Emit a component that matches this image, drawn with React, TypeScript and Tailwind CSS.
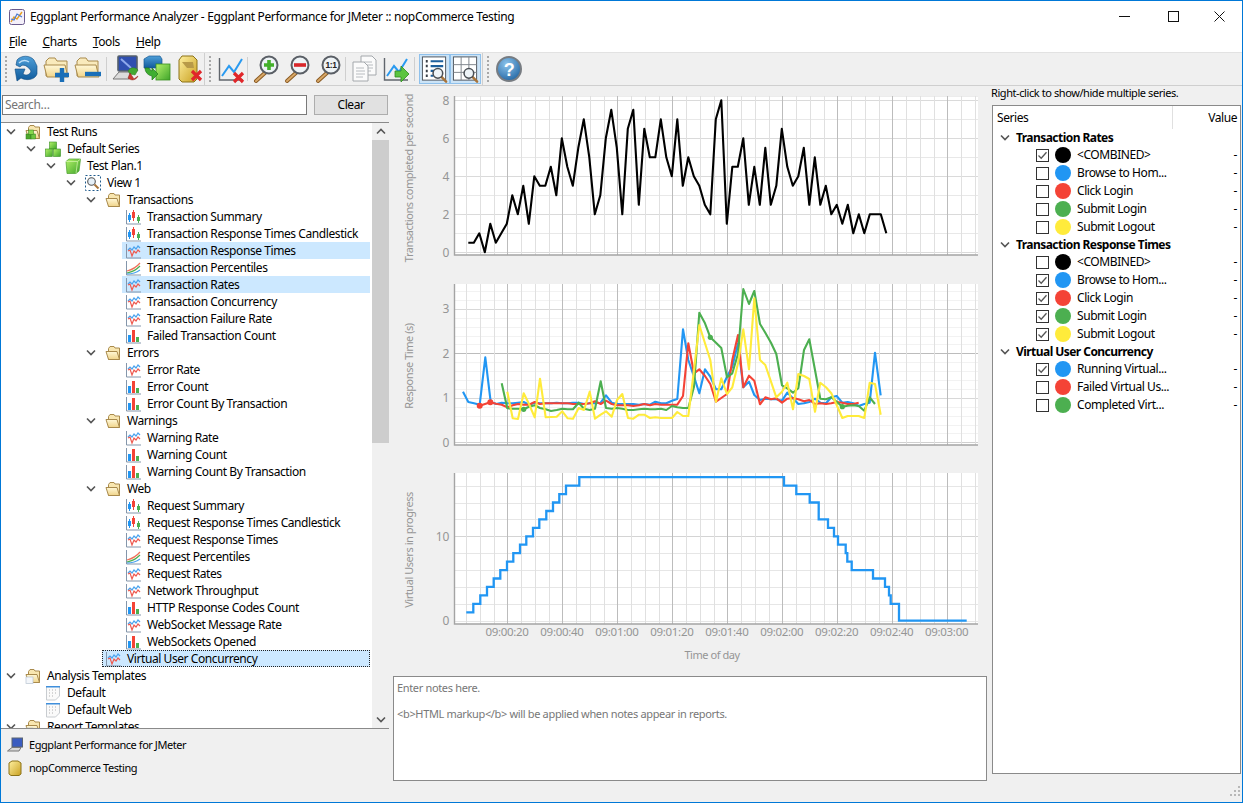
import React from "react";

const B = "#2196f3", R = "#f44336", G = "#4caf50", Y = "#ffeb3b";

function Defs() {
  return (
    <svg className="block w-0 h-0" aria-hidden="true">
      <defs>
        <linearGradient id="gFolder" x1="0" y1="0" x2="0" y2="1"><stop offset="0" stopColor="#fff8d8" /><stop offset="1" stopColor="#f0d48a" /></linearGradient>
        <linearGradient id="gBlue" x1="0" y1="0" x2="0" y2="1"><stop offset="0" stopColor="#4f9fd8" /><stop offset="1" stopColor="#0f5a9c" /></linearGradient>
        <linearGradient id="gGreen" x1="0" y1="0" x2="1" y2="1"><stop offset="0" stopColor="#b4f26a" /><stop offset="1" stopColor="#3fa52a" /></linearGradient>
        <linearGradient id="gGold" x1="0" y1="0" x2="1" y2="1"><stop offset="0" stopColor="#fff0a0" /><stop offset="1" stopColor="#c9a020" /></linearGradient>
        <radialGradient id="gHelp" cx="0.4" cy="0.3" r="0.8"><stop offset="0" stopColor="#8cc4ec" /><stop offset="1" stopColor="#1c5f9e" /></radialGradient>
      </defs>
    </svg>
  );
}

function Chevron({ up }: { up?: boolean }) {
  return (
    <svg width="10" height="7" viewBox="0 0 10 7" className="block">
      <polyline points={up ? "1,5.5 5,1.5 9,5.5" : "1,1.5 5,5.5 9,1.5"} fill="none" stroke="#555" strokeWidth="1.6" />
    </svg>
  );
}

const Axes = () => <path d="M1.5 1V15H16" fill="none" stroke="#8496ab" strokeWidth="1" />;

function TreeIcon({ k }: { k: string }) {
  const p = { width: 16, height: 16, viewBox: "0 0 16 16", className: "block shrink-0" };
  if (k === "line")
    return (
      <svg {...p}>
        <Axes />
        <polyline points="3,7 5,5 7,7 9,4 11,6 13,3 15,5" fill="none" stroke="#4aa3ee" strokeWidth="1.2" />
        <polyline points="3,8 5,7 7,13 9,8 11,10 13,7 15,9" fill="none" stroke="#ee5a50" strokeWidth="1.2" />
      </svg>
    );
  if (k === "candle")
    return (
      <svg {...p}>
        <Axes />
        <path d="M4.5 4V13" stroke="#2196f3" /><rect x="3" y="6" width="3" height="5" fill="#2196f3" />
        <path d="M8.5 1V12" stroke="#f44336" /><rect x="7" y="3" width="3" height="6" fill="#f44336" />
        <path d="M13.5 6V14" stroke="#4caf50" /><rect x="12" y="8" width="3" height="4" fill="#4caf50" />
      </svg>
    );
  if (k === "bar")
    return (
      <svg {...p}>
        <Axes />
        <rect x="3" y="7" width="3" height="7" fill="#2196f3" />
        <rect x="7" y="2" width="3" height="12" fill="#f44336" />
        <rect x="11" y="9" width="3" height="5" fill="#4caf50" />
      </svg>
    );
  if (k === "area")
    return (
      <svg {...p}>
        <Axes />
        <path d="M2 13C6 12 9 12 15 6" fill="none" stroke="#4caf50" strokeWidth="1.2" />
        <path d="M2 11C6 10 10 9 15 3" fill="none" stroke="#f0705a" strokeWidth="1.2" />
        <path d="M2 14C7 14 11 13 15 10" fill="none" stroke="#4aa3ee" strokeWidth="1.2" />
      </svg>
    );
  if (k === "doc")
    return (
      <svg {...p}>
        <path d="M1.5 1.5H14.5V11L10.5 15H1.5Z" fill="#fafafa" stroke="#c8ccd0" />
        <rect x="1" y="1" width="14" height="1.5" fill="#3f8fdc" />
        <path d="M4 5h1M7 5h1M10 5h1M4 8h1M7 8h1M10 8h1M4 11h1M7 11h1" stroke="#b0b0b0" />
      </svg>
    );
  if (k === "folder" || k === "folderGreen" || k === "folderDoc")
    return (
      <svg {...p}>
        <path d="M3.5 3.5L5 1.5H9L10 3H14.5V14.5H3.5Z" fill="#f8e6b0" stroke="#a98a4c" />
        <path d="M1 6.5H12L14.5 14.5H3.5Z" fill="url(#gFolder)" stroke="#a98a4c" />
        {k === "folderGreen" && (
          <g>
            <rect x="1" y="10" width="5" height="5" fill="#4fa82e" stroke="#2f7d1c" strokeWidth=".5" />
            <rect x="6" y="10" width="4.5" height="5" fill="#6cc63f" stroke="#2f7d1c" strokeWidth=".5" />
            <rect x="3.5" y="6" width="5" height="4.5" fill="#86d84c" stroke="#2f7d1c" strokeWidth=".5" />
          </g>
        )}
        {k === "folderDoc" && <rect x="1" y="9" width="7" height="6.5" fill="#f3f6fa" stroke="#b8c4d0" strokeWidth=".7" />}
      </svg>
    );
  if (k === "cubes")
    return (
      <svg {...p}>
        <rect x="4.5" y="1" width="7" height="7" fill="url(#gGreen)" stroke="#3a8f22" strokeWidth=".6" />
        <rect x="0.5" y="8" width="7" height="7.5" fill="url(#gGreen)" stroke="#3a8f22" strokeWidth=".6" />
        <rect x="8.5" y="8" width="7" height="7.5" fill="url(#gGreen)" stroke="#3a8f22" strokeWidth=".6" />
      </svg>
    );
  if (k === "cube")
    return (
      <svg {...p}>
        <path d="M1 3.5L4 1H15.5L14 13L11 15.5H2Z" fill="url(#gGreen)" stroke="#4a9f2e" strokeWidth=".7" />
        <path d="M1 3.5H12.5L15.5 1M12.5 3.5L11 15.5" fill="none" stroke="#d8f8b0" strokeWidth=".7" />
      </svg>
    );
  if (k === "view")
    return (
      <svg {...p}>
        <rect x="0.5" y="0.5" width="15" height="15" fill="none" stroke="#1f5a8c" strokeDasharray="2 2" />
        <circle cx="6.5" cy="6.5" r="3.8" fill="#e6f0f8" stroke="#555" strokeWidth="1.1" />
        <path d="M9.5 9.5L13.5 13.5" stroke="#a8743a" strokeWidth="2" />
      </svg>
    );
  return null;
}

type Row = { t: string; l: number; i: string; open?: boolean; sel?: boolean; focus?: boolean };
const rows: Row[] = [
  { t: "Test Runs", l: 0, i: "folderGreen", open: true },
  { t: "Default Series", l: 1, i: "cubes", open: true },
  { t: "Test Plan.1", l: 2, i: "cube", open: true },
  { t: "View 1", l: 3, i: "view", open: true },
  { t: "Transactions", l: 4, i: "folder", open: true },
  { t: "Transaction Summary", l: 5, i: "candle" },
  { t: "Transaction Response Times Candlestick", l: 5, i: "candle" },
  { t: "Transaction Response Times", l: 5, i: "line", sel: true },
  { t: "Transaction Percentiles", l: 5, i: "area" },
  { t: "Transaction Rates", l: 5, i: "line", sel: true },
  { t: "Transaction Concurrency", l: 5, i: "line" },
  { t: "Transaction Failure Rate", l: 5, i: "line" },
  { t: "Failed Transaction Count", l: 5, i: "bar" },
  { t: "Errors", l: 4, i: "folder", open: true },
  { t: "Error Rate", l: 5, i: "line" },
  { t: "Error Count", l: 5, i: "bar" },
  { t: "Error Count By Transaction", l: 5, i: "bar" },
  { t: "Warnings", l: 4, i: "folder", open: true },
  { t: "Warning Rate", l: 5, i: "line" },
  { t: "Warning Count", l: 5, i: "bar" },
  { t: "Warning Count By Transaction", l: 5, i: "bar" },
  { t: "Web", l: 4, i: "folder", open: true },
  { t: "Request Summary", l: 5, i: "candle" },
  { t: "Request Response Times Candlestick", l: 5, i: "candle" },
  { t: "Request Response Times", l: 5, i: "line" },
  { t: "Request Percentiles", l: 5, i: "area" },
  { t: "Request Rates", l: 5, i: "line" },
  { t: "Network Throughput", l: 5, i: "line" },
  { t: "HTTP Response Codes Count", l: 5, i: "bar" },
  { t: "WebSocket Message Rate", l: 5, i: "line" },
  { t: "WebSockets Opened", l: 5, i: "bar" },
  { t: "Virtual User Concurrency", l: 4, i: "line", sel: true, focus: true },
  { t: "Analysis Templates", l: 0, i: "folderDoc", open: true },
  { t: "Default", l: 1, i: "doc" },
  { t: "Default Web", l: 1, i: "doc" },
  { t: "Report Templates", l: 0, i: "folderDoc", open: true },
];

function Tree() {
  return (
    <div className="flex-1 min-w-0 overflow-hidden pl-[1px]">
      {rows.map((r) => (
        <div key={r.t} className="flex h-[17px] items-center" style={{ paddingLeft: r.l * 20 }}>
          <div className="w-[20px] shrink-0 flex justify-center pr-[2px]">{r.open && <Chevron />}</div>
          <div className={"flex-1 flex h-full items-center gap-[6px] pl-[3px] mr-[2px] " + (r.sel ? "bg-[#cce8ff] " : "") + (r.focus ? "outline-1 outline-dotted -outline-offset-1 outline-[#222]" : "")}>
            <TreeIcon k={r.i} />
            <span className="whitespace-nowrap">{r.t}</span>
          </div>
        </div>
      ))}
    </div>
  );
}

/* Toolbar icons */
const Ic = ({ children }: { children: React.ReactNode }) => (
  <svg width="30" height="30" viewBox="0 0 30 30" className="block">{children}</svg>
);
const BigFolder = () => (
  <g>
    <path d="M4 7L7 4H13L15 7H25V22H4Z" fill="#f9eabc" stroke="#a98a4c" />
    <path d="M2 11H23L26 23H5Z" fill="url(#gFolder)" stroke="#a98a4c" />
  </g>
);
const Lens = ({ children }: { children?: React.ReactNode }) => (
  <g>
    <path d="M16 17L5 27" stroke="#8a5a22" strokeWidth="4" strokeLinecap="round" />
    <path d="M16 17L5 27" stroke="#d8a868" strokeWidth="2" strokeLinecap="round" />
    <circle cx="18" cy="11" r="8.5" fill="#eef3f6" stroke="#5a5f66" strokeWidth="2" />
    {children}
  </g>
);
const MiniLens = () => (
  <g>
    <path d="M22 23L27 28" stroke="#a8743a" strokeWidth="2.6" strokeLinecap="round" />
    <circle cx="18.5" cy="19.5" r="5" fill="#eef4f8" stroke="#4a4f55" strokeWidth="1.6" />
  </g>
);
const ChartAxes = () => (
  <g>
    <path d="M4.5 4V26H28" fill="none" stroke="#60656c" strokeWidth="1.4" />
    <polyline points="7,22 14,12 19,18 27,5" fill="none" stroke="#2a9af0" strokeWidth="2" />
  </g>
);
const RedX = ({ x = 0, y = 0 }: { x?: number; y?: number }) => (
  <path d={`M${x + 17} ${y + 17}L${x + 26} ${y + 26}M${x + 26} ${y + 17}L${x + 17} ${y + 26}`} stroke="#e0262a" strokeWidth="3.2" />
);
const Page = ({ x, y }: { x: number; y: number }) => (
  <g>
    <path d={`M${x} ${y}H${x + 11}L${x + 15} ${y + 4}V${y + 19}H${x}Z`} fill="#fbfbfb" stroke="#a4a8ac" />
    <path d={`M${x + 3} ${y + 6}h8M${x + 3} ${y + 9}h9M${x + 3} ${y + 12}h9M${x + 3} ${y + 15}h7`} stroke="#b8bcc0" />
  </g>
);

const tool: Record<string, React.ReactNode> = {
  refresh: (
    <Ic>
      <path d="M6 6C10 1 19 1 23 6L26 12V20C24 26 15 27 10 24L6 27L4 15H14L12 20C15 22 19 21 20 17C17 12 12 9 9 13L5 11Z" fill="url(#gBlue)" stroke="#0d4a80" strokeWidth=".6" />
      <path d="M8 9C11 6 15 6 18 8" fill="none" stroke="#bfe0f8" strokeWidth="1.5" />
    </Ic>
  ),
  fplus: (
    <Ic>
      <BigFolder />
      <path d="M20 14V28M13 21H27" stroke="#1a6fb8" strokeWidth="4.4" />
    </Ic>
  ),
  fminus: (
    <Ic>
      <BigFolder />
      <path d="M12 20H28" stroke="#1a6fb8" strokeWidth="4.4" />
    </Ic>
  ),
  monitor: (
    <Ic>
      <rect x="7" y="2" width="19" height="15" rx="1" fill="#2f4fb0" stroke="#55606c" strokeWidth="1.6" />
      <path d="M10 5L20 14" stroke="#8ea8ec" strokeWidth="2" />
      <path d="M2 25L8 18H20L18 25Z" fill="#dcdcdc" stroke="#777" />
      <path d="M17 17A6 6 0 0 1 27 16L24 21L19 20Z" fill="#43a832" stroke="#2f7d1c" strokeWidth=".5" />
      <path d="M27 22A6 6 0 0 1 17 24L19 19L23 25Z" fill="#c8382e" stroke="#8a2018" strokeWidth=".5" />
    </Ic>
  ),
  boxes: (
    <Ic>
      <path d="M2 5L7 2H18L20 5V14H2Z" fill="url(#gBlue)" stroke="#1b5a92" strokeWidth=".7" />
      <rect x="14" y="10" width="14" height="16" fill="url(#gGreen)" stroke="#3a8f22" strokeWidth=".8" />
      <path d="M3 14A8 8 0 0 0 10 22V26L16 20L10 14V17A5 5 0 0 1 7 14Z" fill="#3fae30" stroke="#1f7a18" strokeWidth=".7" />
    </Ic>
  ),
  jar: (
    <Ic>
      <path d="M6 6L9 2H20L24 6V25L21 28H9L6 25Z" fill="url(#gGold)" stroke="#8c7318" />
      <path d="M9 8H20L21 14H14Z" fill="#b89a48" />
      <RedX x={2} y={0} />
    </Ic>
  ),
  chartX: (
    <Ic>
      <ChartAxes />
      <RedX x={2} y={2} />
    </Ic>
  ),
  zoomIn: (
    <Ic>
      <Lens>
        <path d="M18 6V16M13 11H23" stroke="#43b02a" strokeWidth="3.6" />
      </Lens>
    </Ic>
  ),
  zoomOut: (
    <Ic>
      <Lens>
        <path d="M12 11H24" stroke="#d8262a" strokeWidth="3.6" />
      </Lens>
    </Ic>
  ),
  zoom1: (
    <Ic>
      <Lens>
        <text x="18" y="14" textAnchor="middle" fontSize="8.5" fontWeight="700" fill="#222" fontFamily="Liberation Sans, sans-serif">1:1</text>
      </Lens>
    </Ic>
  ),
  docs: (
    <Ic>
      <Page x={12} y={2} />
      <Page x={4} y={8} />
    </Ic>
  ),
  chartArrow: (
    <Ic>
      <ChartAxes />
      <path d="M15 17H21V12L29 20L21 28V23H15Z" fill="#5cc440" stroke="#2f8a1e" strokeWidth=".8" />
    </Ic>
  ),
  listZoom: (
    <Ic>
      <rect x="2.5" y="2.5" width="24" height="24" fill="#fff" stroke="#4f565e" />
      <path d="M11 7H24M11 12H24M11 17H15M11 22H14" stroke="#1d5f9c" strokeWidth="2.2" />
      <path d="M6 7h2M6 12h2M6 17h2M6 22h2" stroke="#3a4048" strokeWidth="2.6" />
      <MiniLens />
    </Ic>
  ),
  gridZoom: (
    <Ic>
      <rect x="2.5" y="2.5" width="24" height="24" fill="#fff" stroke="#4f565e" />
      <path d="M2.5 10.5H26.5M2.5 18.5H26.5M10.5 2.5V26.5M18.5 2.5V26.5" stroke="#80868c" />
      <MiniLens />
    </Ic>
  ),
  help: (
    <Ic>
      <circle cx="15" cy="15" r="12" fill="url(#gHelp)" stroke="#777c82" strokeWidth="2" />
      <text x="15" y="21.5" textAnchor="middle" fontSize="18" fontWeight="700" fill="#fff" fontFamily="Liberation Sans, sans-serif">?</text>
    </Ic>
  ),
};

const TB = ({ k, on }: { k: string; on?: boolean }) => (
  <div className={"w-[31px] h-[30px] flex items-center justify-center " + (on ? "bg-[#cce4f7] border border-[#8fc1ec]" : "")}>{tool[k]}</div>
);
const Sep = ({ c }: { c: string }) => <div className={"w-px h-[24px] bg-[#cfcfcf] " + c} />;
const Grip = ({ c }: { c: string }) => (
  <div className={"w-[2px] h-[26px] border-l-2 border-dotted border-[#a8a8a8] " + c} />
);

/* Charts */
function xGrid(y1: number, y2: number) {
  const out: React.ReactNode[] = [];
  for (let n = -3; n <= 34; n++) {
    const x = Math.round(507.3 + n * 13.75) + 0.5;
    const major = n % 4 === 0;
    out.push(<line key={n} x1={x} x2={x} y1={y1} y2={y2} stroke={major ? "#bcbcbc" : "#e0e0e0"} strokeWidth="1" shapeRendering="crispEdges" />);
  }
  return out;
}
const TEXT = "#959595";

function Chart({ y, h, top, bottom, lines, ticks, label, labelY, extra, children }: {
  y: number; h: number; top: number; bottom: number;
  lines: { y: number; c: string }[]; ticks: { y: number; t: string }[];
  label: string; labelY: number; extra?: React.ReactNode; children: React.ReactNode;
}) {
  return (
    <svg width="600" height={h} viewBox={`389 ${y} 600 ${h}`} className="block shrink-0" fontFamily="'Noto Sans', sans-serif" fontSize="11" letterSpacing="-0.45">
      <rect x="454" y={top} width="524" height={bottom - top} fill="#fff" />
      {lines.map((l, i) => (
        <line key={i} x1="454" x2="978" y1={Math.round(l.y) + 0.5} y2={Math.round(l.y) + 0.5} stroke={l.c} shapeRendering="crispEdges" />
      ))}
      {xGrid(top, bottom)}
      {children}
      <path d={`M454.5 ${top}V${bottom}H978`} fill="none" stroke="#a4a4a4" strokeWidth="1.4" />
      {ticks.map((t) => (
        <text key={t.t} x="449" y={t.y + 4.5} textAnchor="end" fill={TEXT} fontSize="12" letterSpacing="-0.3">{t.t}</text>
      ))}
      <text x="0" y="0" transform={`translate(413 ${labelY}) rotate(-90)`} textAnchor="middle" fill={TEXT}>{label}</text>
      {extra}
    </svg>
  );
}

const v1 = [0.5,0.5,1,0,1.5,0.5,1,1.5,3,2,3.5,1.5,4,3.5,3.5,4.5,3,6,4.5,3.5,5.5,7,5,2,3,6,7.5,5.5,2,6.5,7.5,2.5,6.5,5,5,7,5,4,7,3.5,5,4,3.5,2.5,2,7,8,1.5,4.5,4.5,6,2.5,4.5,2.5,5.5,2.5,3.5,6.5,4.5,3.5,4,5.5,2.5,5,2.5,3.5,2,2.5,1.5,2.5,1,2,1,2,2,2,1];
const line1 = v1.map((v, i) => `${(468.3 + i * 5.5).toFixed(1)},${(252.3 - v * 19).toFixed(1)}`).join(" ");

const z = (a: number[][], ox: number, oy: number) => a.map(([x, y]) => `${(ox + x / 3).toFixed(1)},${(oy + y / 3).toFixed(1)}`).join(" ");

const blue = z([[189,335],[205,366],[222,370],[239,374],[256,232],[272,366],[289,372],[305,368],[322,370],[338,370],[354,368],[371,366],[387,374],[404,368],[420,370],[437,370],[453,370],[470,368],[487,370],[503,370],[519,368],[536,368],[552,372],[569,370],[585,370],[602,368],[618,346],[635,368],[651,372],[667,372],[684,372],[700,372],[717,374],[733,372],[750,374],[766,365],[783,370],[799,370],[816,362],[832,357],[849,148],[865,240],[882,290]], 400, 280) + " " + z([[88,340],[105,268],[121,290],[138,328],[154,328],[171,290],[187,260],[204,190],[220,322],[237,305],[253,345],[270,360],[286,356],[303,358],[319,358],[336,362],[352,338],[369,355],[385,372],[402,370],[418,366],[435,356],[451,368],[468,370],[484,352],[500,348],[517,368],[533,366],[550,370],[566,378],[583,372],[599,368],[615,218],[632,346]], 670, 280);
const red = z([[239,377],[255,372],[271,367],[288,371],[305,374],[322,382],[338,376],[354,372],[371,374],[387,374],[404,366],[420,372],[437,370],[453,370],[470,370],[487,370],[503,370],[519,372],[536,372],[552,372],[569,370],[585,364],[602,372],[618,362],[635,372],[651,376],[667,376],[684,376],[700,378],[717,376],[733,372],[750,376],[766,372],[783,374],[799,374],[816,374],[832,374],[849,348],[865,190],[882,280]], 400, 280) + " " + z([[88,268],[105,288],[121,312],[138,365],[154,354],[171,342],[187,240],[204,165],[220,322],[237,287],[253,302],[270,373],[286,352],[303,358],[319,355],[336,368],[352,356],[369,354],[385,358],[402,364],[418,360],[435,372],[451,370],[468,372],[484,370],[500,366],[517,368],[533,372],[550,372],[566,368]], 670, 280);
const green = z([[305,310],[322,385],[338,386],[354,386],[371,388],[387,380],[404,376],[420,384],[437,388],[453,393],[470,390],[487,386],[503,388],[519,388],[536,368],[552,386],[569,390],[585,386],[602,304],[618,384],[635,386],[651,384],[667,386],[684,390],[700,390],[717,388],[733,386],[750,388],[766,388],[783,386],[799,390],[816,378],[832,382],[849,384],[865,384],[882,320]], 400, 280) + " " + z([[88,98],[105,130],[121,172],[138,188],[154,204],[171,292],[187,280],[204,222],[220,27],[237,72],[253,33],[270,132],[286,158],[303,188],[319,222],[336,316],[352,325],[369,338],[385,325],[402,210],[418,178],[435,270],[451,356],[468,358],[484,352],[500,365],[517,380],[533,377],[550,376],[566,378],[583,392],[599,352],[615,372]], 670, 280);
const yellow = z([[322,335],[338,415],[354,417],[371,340],[387,372],[404,412],[420,296],[437,412],[453,411],[470,410],[487,394],[503,415],[519,416],[536,384],[552,390],[569,335],[585,416],[602,404],[618,394],[635,410],[651,360],[667,342],[684,414],[700,416],[717,404],[733,404],[750,414],[766,412],[783,414],[799,414],[816,414],[832,396],[849,408],[865,408],[882,270]], 400, 280) + " " + z([[88,135],[105,190],[121,240],[138,365],[154,295],[171,342],[187,322],[204,250],[220,148],[237,268],[253,55],[270,240],[286,255],[303,305],[319,352],[336,335],[352,308],[369,388],[385,282],[402,288],[418,297],[435,395],[451,308],[468,322],[484,340],[500,375],[517,414],[533,408],[550,408],[566,408],[583,414],[599,308],[615,312],[632,404]], 670, 280);

const upSteps: [number, number][] = [[220,2],[241,3],[261,4],[281,5],[301,6],[321,7],[340,8],[360,9],[379,10],[399,11],[418,12],[439,13],[459,14],[478,15],[498,16],[538,17]];
const downSteps: [number, number][] = [[252,16],[289,15],[329,14],[356,12],[384,11],[402,10],[414,9],[437,8],[442,7],[455,6],[519,5],[555,4],[567,3],[572,2],[597,0]];
const Yv = (v: number) => (620.7 - 8.44 * v).toFixed(1);
let stepPath = `M${(400 + 199 / 3).toFixed(1)} ${Yv(1)}`;
for (const [zx, v] of upSteps) { const x = (400 + zx / 3).toFixed(1); stepPath += `H${x}V${Yv(v)}`; }
for (const [zx, v] of downSteps) { const x = (700 + zx / 3).toFixed(1); stepPath += `H${x}V${Yv(v)}`; }
stepPath += `H${(700 + 800 / 3).toFixed(1)}`;

const Series = ({ p, c }: { p: string; c: string }) => <polyline points={p} fill="none" stroke={c} strokeWidth="2.1" strokeLinejoin="round" />;

function range(start: number, step: number, n: number) {
  return Array.from({ length: n }, (_, i) => start + step * i);
}
const lines1 = [...range(252.3, -19, 9).map((y, i) => ({ y, c: i % 2 ? "#e8e8e8" : "#dadada" })), { y: 96, c: "#ececec" }];
const lines2 = [
  ...range(442.3, -8.9, 18).map((y) => ({ y, c: "#f2f2f2" })),
  { y: 397.7, c: "#d8d8d8" }, { y: 442.3, c: "#d0d0d0" }, { y: 308.7, c: "#d8d8d8" }, { y: 353.3, c: "#bcbcbc" },
];
const lines3 = [...range(620.7, -16.88, 9).map((y) => ({ y, c: "#e6e6e6" })), { y: 536.3, c: "#d4d4d4" }];
const times = ["09:00:20","09:00:40","09:01:00","09:01:20","09:01:40","09:02:00","09:02:20","09:02:40","09:03:00"];

function Check({ on }: { on: boolean }) {
  return (
    <svg width="13" height="13" viewBox="0 0 13 13" className="block shrink-0">
      <rect x="0.5" y="0.5" width="12" height="12" fill="#fff" stroke="#333" />
      {on && <polyline points="2.5,6.5 5.2,9.2 10.5,3.2" fill="none" stroke="#555" strokeWidth="1.3" />}
    </svg>
  );
}

const groups: { name: string; items: [string, string, boolean][] }[] = [
  { name: "Transaction Rates", items: [["<COMBINED>", "bg-[#000000]", true], ["Browse to Hom...", "bg-[#2196f3]", false], ["Click Login", "bg-[#f44336]", false], ["Submit Login", "bg-[#4caf50]", false], ["Submit Logout", "bg-[#ffeb3b]", false]] },
  { name: "Transaction Response Times", items: [["<COMBINED>", "bg-[#000000]", false], ["Browse to Hom...", "bg-[#2196f3]", true], ["Click Login", "bg-[#f44336]", true], ["Submit Login", "bg-[#4caf50]", true], ["Submit Logout", "bg-[#ffeb3b]", true]] },
  { name: "Virtual User Concurrency", items: [["Running Virtual...", "bg-[#2196f3]", true], ["Failed Virtual Us...", "bg-[#f44336]", false], ["Completed Virt...", "bg-[#4caf50]", false]] },
];

export default function App() {
  return (
    <div className="w-[1243px] h-[803px] overflow-hidden flex flex-col bg-[#f0f0f0] border border-[#0078d7] text-[12px] leading-[16px] text-black [font-family:'Noto_Sans',sans-serif] tracking-[-0.42px]">
      <Defs />
      {/* title bar */}
      <div className="h-[31px] bg-white flex items-center shrink-0">
        <div className="ml-[8px] mr-[5px]">
          <svg width="16" height="16" viewBox="0 0 16 16" className="block">
            <rect x="0.5" y="0.5" width="15" height="15" rx="2" fill="#f4f0fa" stroke="#6a5a8c" />
            <polyline points="2,13 5,8 8,10 13,3" fill="none" stroke="#e8a020" strokeWidth="1.4" />
            <polyline points="2,10 5,11 8,5 13,8" fill="none" stroke="#4a7ad0" strokeWidth="1.2" />
          </svg>
        </div>
        <span className="whitespace-nowrap tracking-[-0.35px]">Eggplant Performance Analyzer - Eggplant Performance for JMeter :: nopCommerce Testing</span>
        <div className="ml-auto flex h-full">
          <div className="w-[52px] flex items-center justify-center"><svg width="11" height="11" viewBox="0 0 11 11"><path d="M0 5.5H11" stroke="#111" /></svg></div>
          <div className="w-[46px] flex items-center justify-center"><svg width="11" height="11" viewBox="0 0 11 11"><rect x="0.5" y="0.5" width="10" height="10" fill="none" stroke="#111" /></svg></div>
          <div className="w-[46px] flex items-center justify-center"><svg width="11" height="11" viewBox="0 0 11 11"><path d="M0.5 0.5L10.5 10.5M10.5 0.5L0.5 10.5" stroke="#111" /></svg></div>
        </div>
      </div>
      {/* menu */}
      <div className="h-[20px] bg-white flex items-center gap-[16px] pl-[8px] shrink-0">
        <span><span className="underline">F</span>ile</span>
        <span><span className="underline">C</span>harts</span>
        <span><span className="underline">T</span>ools</span>
        <span><span className="underline">H</span>elp</span>
      </div>
      {/* toolbar */}
      <div className="h-[34px] shrink-0 flex items-center border-t border-[#e2e2e2] border-b border-b-[#cfcfcf]">
        <Grip c="ml-[4px] mr-[3px]" />
        <TB k="refresh" /><TB k="fplus" /><TB k="fminus" />
        <Sep c="mx-[3px]" />
        <TB k="monitor" /><TB k="boxes" /><TB k="jar" />
        <div className="w-px h-[32px] bg-[#cfcfcf] ml-[1px]" />
        <Grip c="ml-[4px] mr-[3px]" />
        <TB k="chartX" />
        <Sep c="mx-[2px]" />
        <TB k="zoomIn" /><TB k="zoomOut" /><TB k="zoom1" />
        <Sep c="mx-[2px]" />
        <TB k="docs" /><TB k="chartArrow" />
        <Sep c="mx-[4px]" />
        <TB k="listZoom" on /><TB k="gridZoom" on />
        <div className="w-px h-[32px] bg-[#cfcfcf] ml-[1px]" />
        <Grip c="ml-[4px] mr-[4px]" />
        <TB k="help" />
      </div>
      {/* main */}
      <div className="flex flex-1 min-h-0">
        {/* left */}
        <div className="w-[388px] shrink-0 flex flex-col">
          <div className="h-[36px] shrink-0 flex items-center pl-[1px] pt-[2px]">
            <div className="w-[305px] h-[20px] bg-white border border-[#7a7a7a] flex items-center pl-[2px] text-[#757575]">Search…</div>
            <div className="ml-[7px] w-[74px] h-[20px] bg-[#e1e1e1] border border-[#adadad] flex items-center justify-center">Clear</div>
          </div>
          <div className="h-[607px] shrink-0 flex bg-white border-t border-b border-[#8a8a8a]">
            <Tree />
            <div className="w-[17px] shrink-0 flex flex-col bg-[#f0f0f0]">
              <div className="h-[17px] flex items-center justify-center"><Chevron up /></div>
              <div className="h-[303px] bg-[#cdcdcd]" />
              <div className="flex-1" />
              <div className="h-[17px] flex items-center justify-center"><Chevron /></div>
            </div>
          </div>
          <div className="flex items-center h-[22px] mt-[5px] pl-[6px] gap-[6px] text-[11px] tracking-[-0.44px]">
            <svg width="16" height="16" viewBox="0 0 16 16" className="block shrink-0">
              <rect x="5" y="1" width="10.5" height="9" fill="#3a5cc0" stroke="#5a6470" />
              <path d="M0.5 14L5 10.5H14L12 14Z" fill="#d8d8d8" stroke="#777" />
            </svg>
            <span>Eggplant Performance for JMeter</span>
          </div>
          <div className="flex items-center h-[22px] mt-[1px] pl-[6px] gap-[6px] text-[11px] tracking-[-0.44px]">
            <svg width="16" height="16" viewBox="0 0 16 16" className="block shrink-0">
              <path d="M2 3L5 1H11L14 3V14L12 15.5H4L2 14Z" fill="url(#gGold)" stroke="#8c7318" />
            </svg>
            <span>nopCommerce Testing</span>
          </div>
        </div>
        {/* center */}
        <div className="w-[600px] shrink-0 flex flex-col">
          <Chart y={86} h={186} top={96} bottom={255} lines={lines1}
            ticks={[0,2,4,6,8].map((v) => ({ y: 252.3 - v * 19, t: String(v) }))}
            label="Transactions completed per second" labelY={178}>
            <polyline points={line1} fill="none" stroke="#000" strokeWidth="2.1" strokeLinejoin="round" />
          </Chart>
          <Chart y={272} h={188} top={284} bottom={445} lines={lines2}
            ticks={[[0,442.3],[1,397.7],[2,353.3],[3,308.7]].map(([v, y]) => ({ y, t: String(v) }))}
            label="Response Time (s)" labelY={366}>
            <Series p={blue} c={B} />
            <Series p={red} c={R} />
            <Series p={green} c={G} />
            <Series p={yellow} c={Y} />
            <circle cx="479.7" cy="405.7" r="3" fill={R} /><circle cx="490.3" cy="402.3" r="3" fill={R} />
            <circle cx="523.7" cy="409.3" r="2.6" fill={G} /><circle cx="710.3" cy="337.3" r="2.6" fill={G} /><circle cx="842.3" cy="406.7" r="2.6" fill={G} />
          </Chart>
          <Chart y={460} h={210} top={473} bottom={624} lines={lines3}
            ticks={[{ y: 620.7, t: "0" }, { y: 536.3, t: "10" }]}
            label="Virtual Users in progress" labelY={550}
            extra={
              <g>
                {times.map((t, i) => (
                  <text key={t} x={507 + i * 54.95} y="636" textAnchor="middle" fill={TEXT} fontSize="11.5" letterSpacing="-0.3">{t}</text>
                ))}
                <text x="712" y="659" textAnchor="middle" fill={TEXT}>Time of day</text>
              </g>
            }>
            <path d={stepPath} fill="none" stroke={B} strokeWidth="2.3" />
          </Chart>
          <div className="ml-[4px] mt-[6px] w-[594px] h-[105px] bg-white border border-[#8a8a8a] px-[3px] pt-[3px] text-[#777777] text-[11px] tracking-[-0.34px] shrink-0">
            <div>Enter notes here.</div>
            <div className="mt-[10px]">&lt;b&gt;HTML markup&lt;/b&gt; will be applied when notes appear in reports.</div>
          </div>
        </div>
        {/* right */}
        <div className="flex-1 min-w-0 flex flex-col pl-[2px] pr-[1px]">
          <div className="h-[19px] shrink-0 flex items-center text-[11px] tracking-[-0.42px] pb-[5px]">Right-click to show/hide multiple series.</div>
          <div className="ml-[1px] h-[669px] bg-white border border-[#8a8a8a] shrink-0">
            <div className="h-[23px] flex items-center">
              <div className="w-[180px] pl-[4px] h-full flex items-center border-r border-[#e0e0e0]">Series</div>
              <div className="flex-1 text-right pr-[3px]">Value</div>
            </div>
            {groups.map((g) => (
              <div key={g.name}>
                <div className="h-[17px] flex items-center">
                  <div className="w-[23px] flex justify-center shrink-0 pl-[1px]"><Chevron /></div>
                  <span className="font-bold whitespace-nowrap tracking-[-0.55px]">{g.name}</span>
                </div>
                {g.items.map(([t, c, on]) => (
                  <div key={t} className="h-[18px] flex items-center pl-[43px]">
                    <Check on={on} />
                    <div className={"w-[16px] h-[16px] rounded-full ml-[6px] shrink-0 " + c} />
                    <span className="ml-[6px] whitespace-nowrap">{t}</span>
                    <span className="ml-auto pr-[3px]">-</span>
                  </div>
                ))}
              </div>
            ))}
          </div>
        </div>
      </div>
      {/* status */}
      <div className="h-[21px] shrink-0 flex items-center justify-end pr-[1px]">
        <svg width="14" height="14" viewBox="0 0 14 14" className="block">
          <path d="M11 2h2M7 6h2M11 6h2M3 10h2M7 10h2M11 10h2" stroke="#b8b8b8" strokeWidth="2" strokeDasharray="2 2" />
        </svg>
      </div>
    </div>
  );
}
